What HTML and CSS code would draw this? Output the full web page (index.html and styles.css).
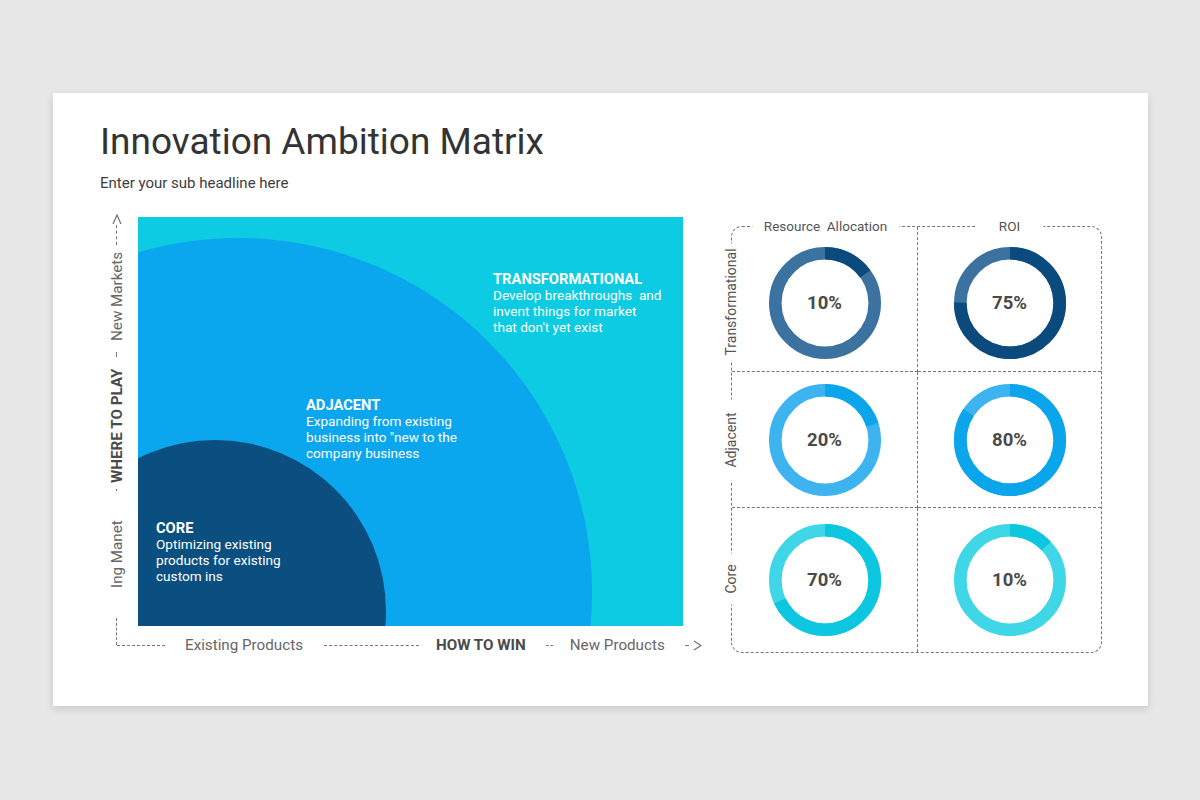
FILE: index.html
```html
<!DOCTYPE html>
<html lang="en">
<head>
<meta charset="utf-8">
<title>Innovation Ambition Matrix</title>
<link rel="stylesheet" href="styles.css">
</head>
<body>
<div class="card">
  <h1 class="title">Innovation Ambition Matrix</h1>
  <p class="subtitle">Enter your sub headline here</p>
  <div class="content">
    <div class="chart">
      <div class="axis-y">
        <i class="vdash h27"></i>
        <span class="ax-label mt30">Ing Manet</span>
        <i class="vdash h2 mt29"></i>
        <span class="ax-label ax-strong mt6">WHERE TO PLAY</span>
        <i class="vdash h5 mt12"></i>
        <span class="ax-label mt11">New Markets</span>
        <i class="vdash h20 mt7"></i>
        <svg class="chev-v" viewBox="0 0 10 11" width="10" height="11"><polyline points="1,1 5,10 9,1" fill="none" stroke="#707070" stroke-width="1.2"/></svg>
      </div>
      <div class="matrix">
        <svg class="matrix-bg" viewBox="0 0 545 409" width="545" height="409">
          <rect width="545" height="409" fill="#0ccbe3"/>
          <circle cx="100" cy="375" r="354" fill="#0aa6ee"/>
          <circle cx="77" cy="394" r="171" fill="#0b4f81"/>
        </svg>
        <div class="zone zone-trans">
          <h3>TRANSFORMATIONAL</h3>
          <p>Develop breakthroughs&nbsp; and<br>invent things for market<br>that don't yet exist</p>
        </div>
        <div class="zone zone-adj">
          <h3>ADJACENT</h3>
          <p>Expanding from existing<br>business into "new to the<br>company business</p>
        </div>
        <div class="zone zone-core">
          <h3>CORE</h3>
          <p>Optimizing existing<br>products for existing<br>custom ins</p>
        </div>
      </div>
      <div class="axis-x">
        <i class="hdash w48"></i>
        <span class="ax-label ml20">Existing Products</span>
        <i class="hdash w95 ml21"></i>
        <span class="ax-label ax-strong ml17">HOW TO WIN</span>
        <i class="hdash w7 ml20"></i>
        <span class="ax-label ml17">New Products</span>
        <i class="hdash w4 ml20"></i>
        <svg class="chev-h" viewBox="0 0 9 11" width="9" height="11"><polyline points="1,1 8,5.5 1,10" fill="none" stroke="#707070" stroke-width="1.2"/></svg>
      </div>
    </div>

    <div class="roi">
      <div class="cell r1 c1">
        <span class="col-label col-ra">Resource&nbsp; Allocation</span>
        <span class="row-label row-t">Transformational</span>
        <div class="donut">
          <svg viewBox="0 0 112 112" width="112" height="112">
            <circle cx="56" cy="56" r="49.7" class="ring base-1"/>
            <circle cx="56" cy="56" r="49.7" class="ring acc-1" stroke-dasharray="46.8 400" transform="rotate(-90 56 56)"/>
          </svg>
          <span class="pct">10%</span>
        </div>
      </div>
      <div class="cell r1 c2">
        <span class="col-label col-roi">ROI</span>
        <div class="donut">
          <svg viewBox="0 0 112 112" width="112" height="112">
            <circle cx="56" cy="56" r="49.7" class="ring base-1"/>
            <circle cx="56" cy="56" r="49.7" class="ring acc-1" stroke-dasharray="234.2 400" transform="rotate(-90 56 56)"/>
          </svg>
          <span class="pct">75%</span>
        </div>
      </div>
      <div class="cell r2 c1">
        <span class="row-label row-a">Adjacent</span>
        <div class="donut">
          <svg viewBox="0 0 112 112" width="112" height="112">
            <circle cx="56" cy="56" r="49.7" class="ring base-2"/>
            <circle cx="56" cy="56" r="49.7" class="ring acc-2" stroke-dasharray="62.5 400" transform="rotate(-90 56 56)"/>
          </svg>
          <span class="pct">20%</span>
        </div>
      </div>
      <div class="cell r2 c2">
        <div class="donut">
          <svg viewBox="0 0 112 112" width="112" height="112">
            <circle cx="56" cy="56" r="49.7" class="ring base-2"/>
            <circle cx="56" cy="56" r="49.7" class="ring acc-2" stroke-dasharray="263 400" transform="rotate(-90 56 56)"/>
          </svg>
          <span class="pct">80%</span>
        </div>
      </div>
      <div class="cell r3 c1">
        <span class="row-label row-c">Core</span>
        <div class="donut">
          <svg viewBox="0 0 112 112" width="112" height="112">
            <circle cx="56" cy="56" r="49.7" class="ring base-3"/>
            <circle cx="56" cy="56" r="49.7" class="ring acc-3" stroke-dasharray="212.3 400" transform="rotate(-90 56 56)"/>
          </svg>
          <span class="pct">70%</span>
        </div>
      </div>
      <div class="cell r3 c2">
        <div class="donut">
          <svg viewBox="0 0 112 112" width="112" height="112">
            <circle cx="56" cy="56" r="49.7" class="ring base-3"/>
            <circle cx="56" cy="56" r="49.7" class="ring acc-3" stroke-dasharray="40.6 400" transform="rotate(-90 56 56)"/>
          </svg>
          <span class="pct">10%</span>
        </div>
      </div>
    </div>
  </div>
</div>
</body>
</html>
```

FILE: styles.css
```css
* { box-sizing: border-box; }

html, body {
  margin: 0;
  width: 1200px;
  height: 800px;
  overflow: hidden;
  background: #e8e7e8;
  font-family: Roboto, "Liberation Sans", Arial, sans-serif;
}

body { padding: 93px 0 0 53px; }

.card {
  width: 1095px;
  height: 613px;
  background: #fff;
  box-shadow: 0 3px 8px rgba(0, 0, 0, 0.13);
  padding: 27px 0 0 47px;
}

.title {
  margin: 0;
  font-size: 37px;
  line-height: 44px;
  font-weight: 400;
  color: #333;
}

.subtitle {
  margin: 9px 0 0;
  font-size: 15px;
  line-height: 20px;
  color: #3d3d3d;
}

.content {
  display: flex;
  align-items: flex-start;
  margin-top: 24px;
}

/* ---------- chart ---------- */
.chart {
  display: grid;
  grid-template-columns: 34px 545px;
  grid-template-rows: 409px 38px;
  column-gap: 4px;
}

.axis-y {
  grid-column: 1;
  grid-row: 1 / 3;
  writing-mode: vertical-rl;
  transform: rotate(180deg);
  display: flex;
  align-items: center;
  padding-top: 19px;
}

.axis-x {
  grid-column: 1 / 3;
  grid-row: 2;
  display: flex;
  align-items: center;
  padding-left: 17px;
}

.axis-x > *, .axis-y > * { flex: none; }

.ax-label {
  font-size: 15.2px;
  line-height: 18px;
  color: #666;
  white-space: nowrap;
}

.ax-strong {
  font-weight: 700;
  color: #4a4a4a;
}

.vdash {
  display: block;
  width: 0;
  border-left: 1px dashed #767676;
}
.h27 { height: 27px; }
.h2 { height: 2px; }
.h5 { height: 5px; }
.h20 { height: 20px; }
.mt30 { margin-top: 30px; }
.mt29 { margin-top: 29px; }
.mt6 { margin-top: 6px; }
.mt12 { margin-top: 12px; }
.mt11 { margin-top: 11px; }
.mt7 { margin-top: 7px; }

.hdash {
  display: block;
  height: 0;
  border-top: 1px dashed #767676;
}
.w48 { width: 48px; }
.w95 { width: 95px; }
.w7 { width: 7px; }
.w4 { width: 4px; }
.ml20 { margin-left: 20px; }
.ml21 { margin-left: 21px; }
.ml17 { margin-left: 17px; }

.chev-v, .chev-h { display: block; }
.chev-h { margin-left: 4px; }

.matrix {
  grid-column: 2;
  grid-row: 1;
  position: relative;
  width: 545px;
  height: 409px;
  overflow: hidden;
}

.matrix-bg { display: block; }

.zone {
  position: absolute;
  color: #fff;
  font-size: 13.6px;
  line-height: 16px;
  white-space: nowrap;
}
.zone h3 {
  margin: 0;
  font-size: 14.7px;
  line-height: 16px;
  font-weight: 700;
}
.zone p { margin: 0; }

.zone-trans { left: 355px; top: 54px; }
.zone-adj { left: 168px; top: 180px; }
.zone-core { left: 18px; top: 303px; }

/* ---------- ROI grid ---------- */
.roi {
  margin-left: 48px;
  margin-top: 9px;
  width: 371px;
  height: 427px;
  border: 1px dashed #767676;
  border-radius: 11px;
  display: grid;
  grid-template-columns: 186px 1fr;
  grid-template-rows: 145px 136px 1fr;
}

.cell {
  position: relative;
  display: flex;
  align-items: center;
  justify-content: center;
}
.c1 { border-right: 1px dashed #767676; }
.r1, .r2 { border-bottom: 1px dashed #767676; }
.r1 { padding-top: 7px; }

.col-label {
  position: absolute;
  top: -9px;
  left: 50%;
  transform: translateX(-50%);
  background: #fff;
  font-size: 13.5px;
  line-height: 16px;
  color: #555;
  white-space: nowrap;
}
.col-ra { padding: 0 12px; margin-left: 1px; }
.col-roi { padding: 0 23px; }

.row-label {
  position: absolute;
  left: -9px;
  top: 50%;
  writing-mode: vertical-rl;
  transform: translateY(-50%) rotate(180deg);
  background: #fff;
  font-size: 14px;
  line-height: 16px;
  color: #555;
  white-space: nowrap;
}
.row-t { padding: 5px 0; margin-top: 3px; }
.row-a { padding: 13px 0; }
.row-c { padding: 11px 0; margin-top: -1px; }

.donut {
  display: grid;
  place-items: center;
  width: 112px;
  height: 112px;
}
.donut > * { grid-area: 1 / 1; }
.donut svg { display: block; }

.ring { fill: none; stroke-width: 12.6; }
.base-1 { stroke: #3c72a0; }
.acc-1 { stroke: #0b4a7d; }
.base-2 { stroke: #3db4f0; }
.acc-2 { stroke: #0ba5eb; }
.base-3 { stroke: #3fd6e7; }
.acc-3 { stroke: #0cc7df; }

.pct {
  font-size: 18.5px;
  font-weight: 700;
  color: #4a4a4a;
}
```
